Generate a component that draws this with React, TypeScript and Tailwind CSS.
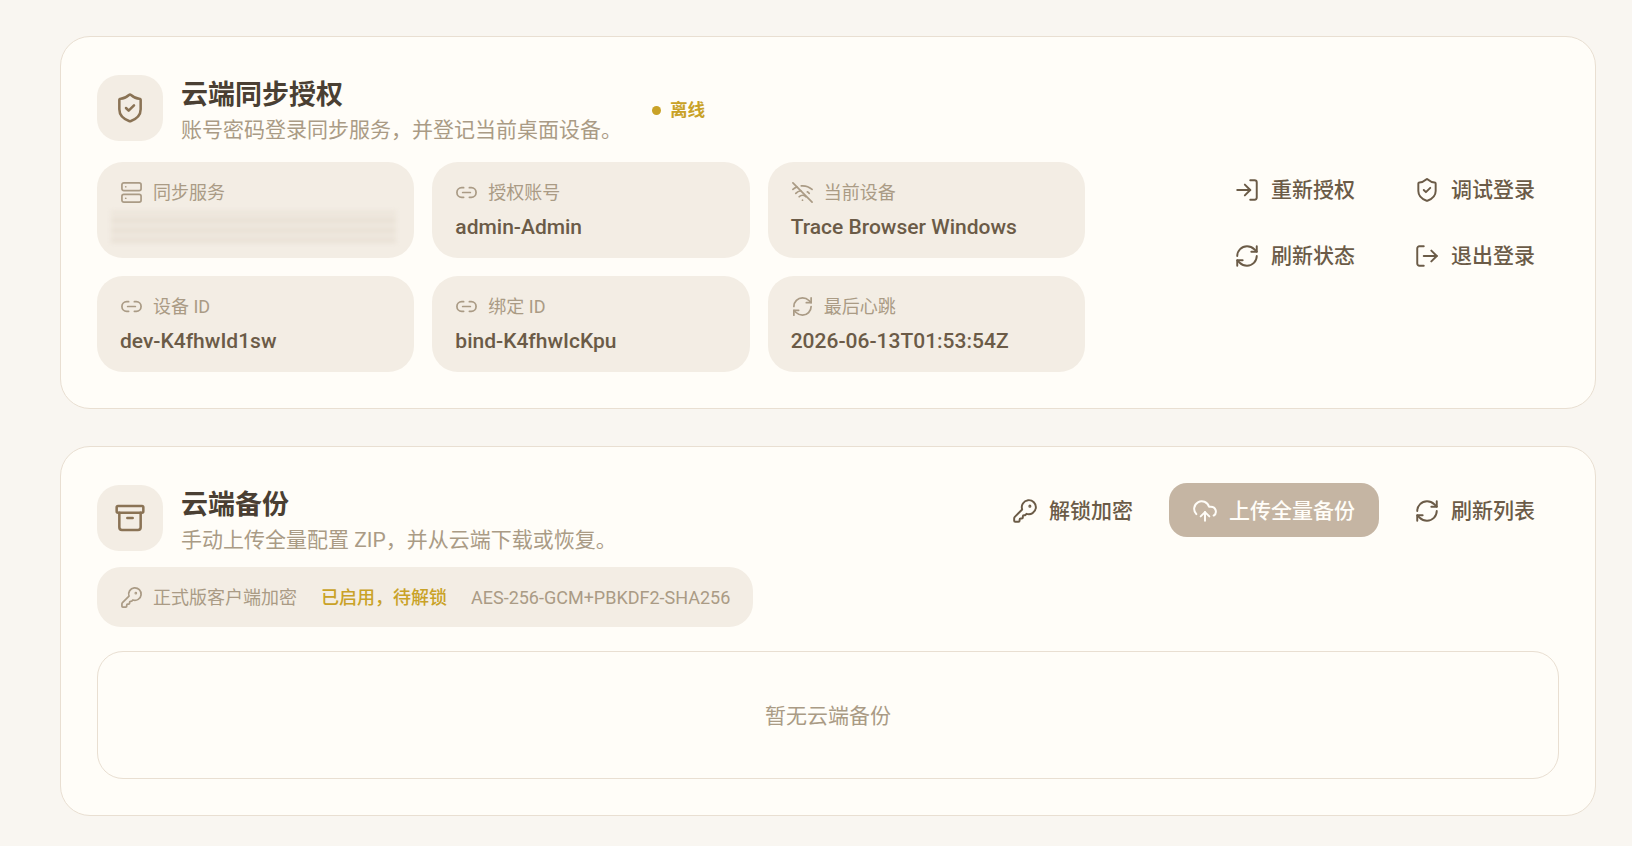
import React from 'react';
import { Archive, CloudUpload, KeyRound, Link2, LogIn, LogOut, RefreshCw, Server, ShieldCheck, WifiOff } from 'lucide-react';
import type { LucideIcon } from 'lucide-react';

const font = { fontFamily: 'Roboto, "Noto Sans CJK SC", sans-serif' };

const InfoCell: React.FC<{ icon: LucideIcon; label: string; value?: string }> = ({ icon: Icon, label, value }) => {
  return (
    <div className="h-[96px] rounded-[26px] bg-[#f3ede4] pl-[23px] pr-[14px] pt-[15px]">
      <div className="flex h-[30px] items-center gap-[10px] text-[18px] text-[#aa9b85]">
        <Icon size={23} strokeWidth={1.8} />
        <span>{label}</span>
      </div>
      {value ? (
        <div className="mt-[5px] text-[21px] font-medium leading-[30px] text-[#6b5b47]">{value}</div>
      ) : (
        <div className="-ml-[9px] mt-[4px] h-[32px] w-[285px] bg-[repeating-linear-gradient(0deg,#e9e1d6_0px,#e9e1d6_5px,#efe8de_5px,#efe8de_10px)] blur-[2px]" />
      )}
    </div>
  );
};

const ActionButton: React.FC<{ icon: LucideIcon; label: string }> = ({ icon: Icon, label }) => {
  return (
    <button className="flex h-[54px] items-center gap-[11px] rounded-[18px] pl-[23px] pr-[24px] pt-[2px] text-[21px] font-medium text-[#6b5b47]">
      <Icon size={26} strokeWidth={1.8} />
      <span className="pt-[2px]">{label}</span>
    </button>
  );
};

const SectionTitle: React.FC<{ icon: LucideIcon; title: string; sub: string }> = ({ icon: Icon, title, sub }) => {
  return (
    <div className="flex items-start gap-[18px]">
      <div className="mt-[2px] flex h-[66px] w-[66px] items-center justify-center rounded-[22px] bg-[#f3ede4] text-[#8a7355]">
        <Icon size={32} strokeWidth={1.9} />
      </div>
      <div className="pt-[4px]">
        <h2 className="text-[27px] font-bold leading-[36px] text-[#4a3f33]">{title}</h2>
        <p className="text-[21px] leading-[35px] text-[#aa9b85]">{sub}</p>
      </div>
    </div>
  );
};

export default function App() {
  return (
    <div style={font} className="flex min-h-[846px] flex-col gap-[37px] bg-[#f9f6f1] pb-[32px] pl-[60px] pr-[36px] pt-[36px]">
      <section className="rounded-[30px] border border-[#e9dfd2] bg-[#fffdf8] px-[36px] py-[36px]">
        <div className="flex items-center gap-[30px]">
          <SectionTitle icon={ShieldCheck} title="云端同步授权" sub="账号密码登录同步服务，并登记当前桌面设备。" />
          <div className="flex items-center gap-[9px] text-[17.6px] font-bold text-[#c9a227]">
            <span className="h-[9px] w-[9px] rounded-full bg-[#c9a227]" />
            离线
          </div>
        </div>
        <div className="mt-[14px] flex items-start justify-between">
          <div className="grid w-[988px] grid-cols-3 gap-[18px]">
            <InfoCell icon={Server} label="同步服务" />
            <InfoCell icon={Link2} label="授权账号" value="admin-Admin" />
            <InfoCell icon={WifiOff} label="当前设备" value="Trace Browser Windows" />
            <InfoCell icon={Link2} label="设备 ID" value="dev-K4fhwId1sw" />
            <InfoCell icon={Link2} label="绑定 ID" value="bind-K4fhwIcKpu" />
            <InfoCell icon={RefreshCw} label="最后心跳" value="2026-06-13T01:53:54Z" />
          </div>
          <div className="grid grid-cols-2 gap-[12px]">
            <ActionButton icon={LogIn} label="重新授权" />
            <ActionButton icon={ShieldCheck} label="调试登录" />
            <ActionButton icon={RefreshCw} label="刷新状态" />
            <ActionButton icon={LogOut} label="退出登录" />
          </div>
        </div>
      </section>

      <section className="rounded-[30px] border border-[#e9dfd2] bg-[#fffdf8] px-[36px] py-[36px]">
        <div className="flex items-start justify-between">
          <SectionTitle icon={Archive} title="云端备份" sub="手动上传全量配置 ZIP，并从云端下载或恢复。" />
          <div className="flex gap-[12px]">
            <ActionButton icon={KeyRound} label="解锁加密" />
            <button className="flex h-[54px] items-center gap-[11px] rounded-[18px] bg-[#c5b5a3] pl-[23px] pr-[24px] pt-[2px] text-[21px] font-medium text-[#fffdf8]">
              <CloudUpload size={26} strokeWidth={1.8} />
              <span className="pt-[2px]">上传全量备份</span>
            </button>
            <ActionButton icon={RefreshCw} label="刷新列表" />
          </div>
        </div>
        <div className="mt-[9px] flex h-[60px] w-fit items-center rounded-[24px] bg-[#f3ede4] px-[23px] text-[18px] text-[#aa9b85]">
          <KeyRound size={23} strokeWidth={1.8} className="mr-[10px]" />
          <span>正式版客户端加密</span>
          <span className="ml-[24px] font-medium text-[#c9a227]">已启用，待解锁</span>
          <span className="ml-[24px]">AES-256-GCM+PBKDF2-SHA256</span>
        </div>
        <div className="mt-[24px] flex h-[128px] items-center justify-center rounded-[26px] border border-[#e9dfd2] pt-[4px] text-[21px] text-[#aa9b85]">
          暂无云端备份
        </div>
      </section>
    </div>
  );
}
